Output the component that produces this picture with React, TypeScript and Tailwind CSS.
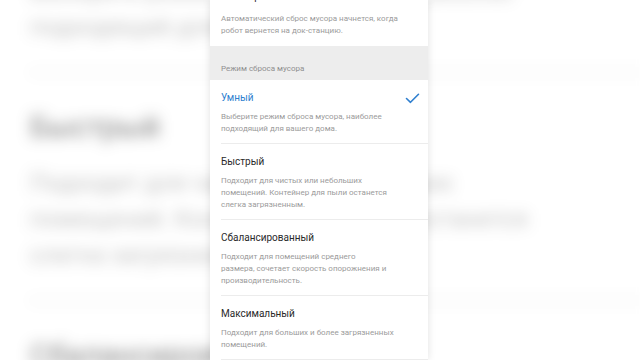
import React from "react";

type Item = { title: string; lines: string[]; active?: boolean };

const items: Item[] = [
  { title: "Умный", lines: ["Выберите режим сброса мусора, наиболее", "подходящий для вашего дома."], active: true },
  { title: "Быстрый", lines: ["Подходит для чистых или небольших", "помещений. Контейнер для пыли останется", "слегка загрязненным."] },
  { title: "Сбалансированный", lines: ["Подходит для помещений среднего", "размера, сочетает скорость опорожнения и", "производительность."] },
  { title: "Максимальный", lines: ["Подходит для больших и более загрязненных", "помещений."] },
];

function Check() {
  return (
    <svg width="15" height="11" viewBox="0 0 15 11" fill="none">
      <path d="M1.5 5.5 L5.5 9.3 L13.5 1.3" stroke="#2f7fcf" strokeWidth="1.6" strokeLinecap="round" strokeLinejoin="round" />
    </svg>
  );
}

function Row({ item }: { item: Item }) {
  return (
    <div className="pl-[11px]">
      <div className="pt-[11px] pb-[8px] pr-[8px] border-b border-[#ececec]">
        <div className="flex items-center justify-between h-[14px]">
          <span className={"text-[10px] leading-[14px] " + (item.active ? "text-[#2f7fcf]" : "text-[#2a2a2a]")}>{item.title}</span>
          {item.active ? <Check /> : null}
        </div>
        <div className="mt-[6px] text-[8px] leading-[12px] text-[#9b9b9b]">
          {item.lines.map((l, i) => (
            <div key={i} className="whitespace-nowrap">{l}</div>
          ))}
        </div>
      </div>
    </div>
  );
}

function List() {
  return (
    <div className="w-[218px] bg-white" style={{ fontFamily: "Roboto, 'Noto Sans', sans-serif" }}>
      <div className="mt-[-21px] pl-[11px] pt-[11px] pb-[9px]">
        <div className="text-[10px] leading-[14px] text-[#2a2a2a]">Автосброс</div>
        <div className="mt-[9px] text-[8px] leading-[12px] text-[#9b9b9b]">
          <div className="whitespace-nowrap">Автоматический сброс мусора начнется, когда</div>
          <div className="whitespace-nowrap">робот вернется на док-станцию.</div>
        </div>
      </div>
      <div className="bg-[#ededed] pl-[11px] pt-[17px] pb-[5px] text-[8px] leading-[12px] text-[#8f8f8f]">Режим сброса мусора</div>
      {items.map((it, i) => (
        <Row key={i} item={it} />
      ))}
    </div>
  );
}

export default function App() {
  return (
    <div className="relative w-[640px] h-[360px] overflow-hidden bg-white">
      <div className="absolute inset-0 blur-[7px] opacity-60">
        <div className="absolute left-[-3px] top-[-358px] origin-top-left scale-[3]">
          <List />
        </div>
      </div>
      <div className="absolute inset-0 flex justify-center">
        <div className="relative ml-[-2px] h-[360px] overflow-hidden shadow-[0_0_8px_rgba(0,0,0,0.12)]">
          <List />
        </div>
      </div>
    </div>
  );
}
